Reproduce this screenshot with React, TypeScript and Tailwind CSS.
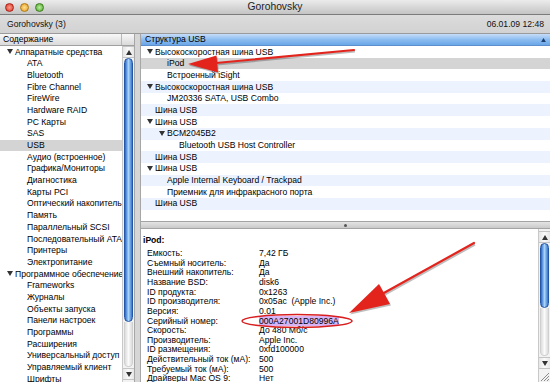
import React from "react";

const Tri = ({ up = false }: { up?: boolean }) => (
  <svg width="6" height="5" viewBox="0 0 6 5" className="shrink-0">
    <path d={up ? "M0 5H6L3 0Z" : "M0 0H6L3 5Z"} fill="#333" />
  </svg>
);

const side: [string, number][] = [
  ["Аппаратные средства", 0],
  ["ATA", 1],
  ["Bluetooth", 1],
  ["Fibre Channel", 1],
  ["FireWire", 1],
  ["Hardware RAID", 1],
  ["PC Карты", 1],
  ["SAS", 1],
  ["USB", 1],
  ["Аудио (встроенное)", 1],
  ["Графика/Мониторы", 1],
  ["Диагностика", 1],
  ["Карты PCI", 1],
  ["Оптический накопитель", 1],
  ["Память", 1],
  ["Параллельный SCSI", 1],
  ["Последовательный ATA", 1],
  ["Принтеры", 1],
  ["Электропитание", 1],
  ["Программное обеспечение", 0],
  ["Frameworks", 1],
  ["Журналы", 1],
  ["Объекты запуска", 1],
  ["Панели настроек", 1],
  ["Программы", 1],
  ["Расширения", 1],
  ["Универсальный доступ", 1],
  ["Управляемый клиент", 1],
  ["Шрифты", 1],
];

type Node = { t: string; lvl: number; open?: boolean; sel?: boolean };
const tree: Node[] = [
  { t: "Высокоскоростная шина USB", lvl: 0, open: true },
  { t: "iPod", lvl: 1, sel: true },
  { t: "Встроенный iSight", lvl: 1 },
  { t: "Высокоскоростная шина USB", lvl: 0, open: true },
  { t: "JM20336 SATA, USB Combo", lvl: 1 },
  { t: "Шина USB", lvl: 0 },
  { t: "Шина USB", lvl: 0, open: true },
  { t: "BCM2045B2", lvl: 1, open: true },
  { t: "Bluetooth USB Host Controller", lvl: 2 },
  { t: "Шина USB", lvl: 0 },
  { t: "Шина USB", lvl: 0, open: true },
  { t: "Apple Internal Keyboard / Trackpad", lvl: 1 },
  { t: "Приемник для инфракрасного порта", lvl: 1 },
  { t: "Шина USB", lvl: 0 },
  { t: "", lvl: 0 },
];

const triPad = ["pl-[6px]", "pl-[18px]", "pl-[30px]"];
const leafPad = ["pl-[14px]", "pl-[26px]", "pl-[38px]"];

const details: [string, string][] = [
  ["Емкость:", "7,42 ГБ"],
  ["Съемный носитель:", "Да"],
  ["Внешний накопитель:", "Да"],
  ["Название BSD:", "disk6"],
  ["ID продукта:", "0x1263"],
  ["ID производителя:", "0x05ac  (Apple Inc.)"],
  ["Версия:", "0.01"],
  ["Серийный номер:", "000A27001D80996A"],
  ["Скорость:", "До 480 Мб/с"],
  ["Производитель:", "Apple Inc."],
  ["ID размещения:", "0xfd100000"],
  ["Действительный ток (мА):", "500"],
  ["Требуемый ток (мА):", "500"],
  ["Драйверы Mac OS 9:", "Нет"],
];

const Thumb = ({ h }: { h: string }) => (
  <div className={`${h} mx-[1px] rounded-full border border-[#2456a8] bg-linear-to-r from-[#2a66c6] via-[#a9d4fa] to-[#3474d0]`} />
);

const ArrowBox = ({ up }: { up?: boolean }) => (
  <div className="h-[12px] flex items-center justify-center bg-linear-to-r from-[#e6e6e6] via-[#fafafa] to-[#e6e6e6] border-y border-[#c4c4c4]">
    <Tri up={up} />
  </div>
);

export default function App() {
  return (
    <div className="relative w-[550px] h-[382px] overflow-hidden flex flex-col bg-[#e3e3e3] text-black font-['Liberation_Sans',Arial,sans-serif] text-[8.6px] leading-none">
      {/* title bar */}
      <div className="h-[15px] shrink-0 relative flex items-center bg-linear-to-b from-[#ececec] to-[#c4c4c4] border-b border-[#7c7c7c]">
        <div className="flex gap-[6px] pl-[5px]">
          <span className="w-[9px] h-[9px] rounded-full bg-radial from-[#ff9a8a] to-[#d5281c] border border-[#a8241a]" />
          <span className="w-[9px] h-[9px] rounded-full bg-radial from-[#ffe08a] to-[#e59a10] border border-[#b27a0c]" />
          <span className="w-[9px] h-[9px] rounded-full bg-radial from-[#b8f09a] to-[#4ea52a] border border-[#3e7e20]" />
        </div>
        <div className="absolute inset-0 flex items-center justify-center text-[10.3px] text-[#222]">Gorohovsky</div>
      </div>
      {/* toolbar */}
      <div className="h-[19px] shrink-0 flex items-center justify-between px-[7px] pr-[6px] bg-linear-to-b from-[#dcdcdc] to-[#d2d2d2] border-b border-[#9a9a9a] text-[#111]">
        <span>Gorohovsky (3)</span>
        <span>06.01.09 12:48</span>
      </div>
      {/* content */}
      <div className="flex-1 flex min-h-0">
        {/* sidebar */}
        <div className="w-[134px] shrink-0 flex flex-col bg-white">
          <div className="h-[12px] shrink-0 flex bg-linear-to-b from-[#f8f8f8] to-[#dadada] border-b border-[#a0a0a0]">
            <div className="flex-1 flex items-center pl-[3px] border-r border-[#b8b8b8]">Содержание</div>
            <div className="w-[12px]" />
          </div>
          <div className="flex-1 flex min-h-0">
            <div className="flex-1 overflow-hidden">
              {side.map(([t, lvl], i) => (
                <div
                  key={i}
                  className={`h-[11.7px] flex items-center whitespace-nowrap ${t === "USB" ? "bg-[#d4d4d4]" : ""}`}
                >
                  {lvl === 0 ? (
                    <span className="flex items-center pl-[7px] gap-[2px]">
                      <Tri />
                      {t}
                    </span>
                  ) : (
                    <span className="pl-[27px]">{t}</span>
                  )}
                </div>
              ))}
            </div>
            <div className="w-[12px] shrink-0 flex flex-col bg-[#f2f2f2] border-l border-[#c8c8c8]">
              <ArrowBox up />
              <Thumb h="h-[264px]" />
              <div className="flex-1 mx-[1px] mb-[1px] rounded-b-full bg-linear-to-r from-[#dcdcdc] via-[#fbfbfb] to-[#dcdcdc] border-x border-b border-[#cfcfcf]" />
              <ArrowBox />
              <div className="h-[2px]" />
            </div>
          </div>
        </div>
        {/* divider */}
        <div className="w-[7px] shrink-0 bg-[#d6d6d6] border-x border-[#a6a6a6]" />
        {/* main */}
        <div className="flex-1 flex flex-col min-w-0">
          <div className="h-[12px] shrink-0 flex items-center justify-between pl-[4px] pr-[4px] bg-linear-to-b from-[#c6ddf8] via-[#8dbdf0] to-[#6aa6e8] border-b border-[#5d8fcf]">
            <span>Структура USB</span>
            <svg width="5" height="4" viewBox="0 0 6 5"><path d="M0 5H6L3 0Z" fill="#1e3f6e" /></svg>
          </div>
          <div className="h-[175px] shrink-0 overflow-hidden bg-white">
            {tree.map((n, i) => (
              <div
                key={i}
                className={`h-[11.7px] flex items-center whitespace-nowrap ${
                  n.sel ? "bg-[#d4d4d4]" : i % 2 === 1 ? "bg-[#edf3fe]" : "bg-white"
                }`}
              >
                {n.open ? (
                  <span className={`flex items-center gap-[2px] ${triPad[n.lvl]}`}>
                    <Tri />
                    {n.t}
                  </span>
                ) : (
                  <span className={leafPad[n.lvl]}>{n.t}</span>
                )}
              </div>
            ))}
          </div>
          {/* splitter */}
          <div className="h-[8px] shrink-0 flex items-center justify-center bg-linear-to-b from-[#e4e4e4] to-[#cacaca] border-y border-[#a4a4a4]">
            <span className="w-[3px] h-[3px] rounded-full bg-[#555]" />
          </div>
          {/* detail pane */}
          <div className="flex-1 flex min-h-0 bg-white">
            <div className="flex-1 overflow-hidden pt-[6px]">
              <div className="h-[10px] flex items-center pl-[2px] font-bold">iPod:</div>
              <div className="mt-[3.5px]">
                {details.map(([k, v], i) => (
                  <div key={i} className="h-[9.65px] flex items-center whitespace-nowrap pl-[6px]">
                    <span className="w-[112px] shrink-0">{k}</span>
                    {k === "Серийный номер:" ? (
                      <span className="bg-[#d8b4f4] py-[0.5px]">{v}</span>
                    ) : (
                      <span className="whitespace-pre">{v}</span>
                    )}
                  </div>
                ))}
              </div>
            </div>
            <div className="w-[12px] shrink-0 flex flex-col bg-[#f2f2f2] border-l border-[#c8c8c8]">
              <div className="h-[2px]" />
              <ArrowBox up />
              <Thumb h="h-[65px]" />
              <div className="flex-1 mx-[1px] mb-[1px] rounded-b-full bg-linear-to-r from-[#dcdcdc] via-[#fbfbfb] to-[#dcdcdc] border-x border-b border-[#cfcfcf]" />
              <ArrowBox />
              <div className="h-[13px] flex items-end justify-end">
                <svg width="11" height="11" viewBox="0 0 11 11">
                  <path d="M10 2L2 10M10 5L5 10M10 8L8 10" stroke="#8a8a8a" strokeWidth="1" />
                </svg>
              </div>
            </div>
          </div>
        </div>
      </div>

      {/* annotations */}
      <svg className="absolute inset-0 pointer-events-none" width="550" height="382" viewBox="0 0 550 382">
        <g opacity="0.25" transform="translate(1 1.5)">
          <path d="M354 50L216 63" stroke="#000" strokeWidth="2.2" />
          <path d="M188 64L218 72.5L216.5 55.5Z" fill="#000" />
          <path d="M474 243L382 294" stroke="#000" strokeWidth="2.2" />
          <path d="M349 313L390 304L379 284Z" fill="#000" />
        </g>
        <path d="M354 50L216 63" stroke="#e3241d" strokeWidth="2.2" strokeLinecap="round" />
        <path d="M188 64L218 72.5L216.5 55.5Z" fill="#e3241d" />
        <path d="M474 243L382 294" stroke="#e3241d" strokeWidth="2.2" strokeLinecap="round" />
        <path d="M349 313L390 304L379 284Z" fill="#e3241d" />
        <ellipse cx="297" cy="321" rx="55" ry="6.5" fill="none" stroke="#d81e1e" strokeWidth="1.5" />
      </svg>
    </div>
  );
}
